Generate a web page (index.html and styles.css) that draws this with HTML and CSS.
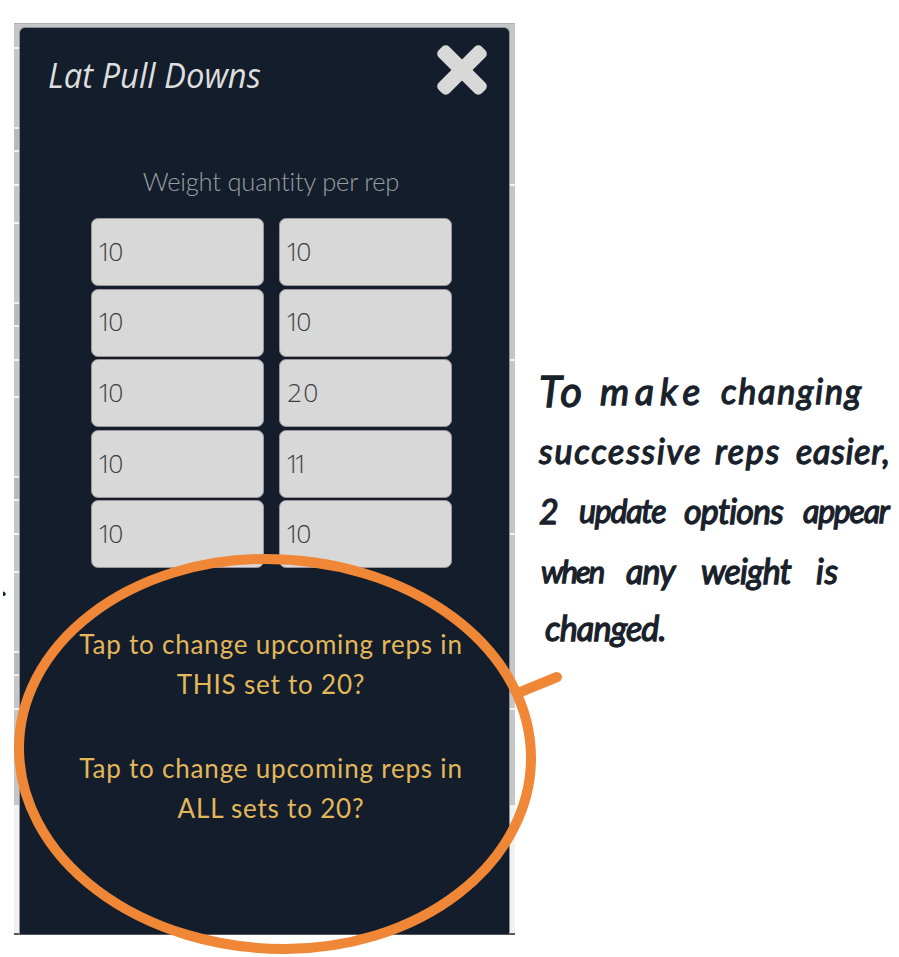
FILE: index.html
```html
<!DOCTYPE html>
<html lang="en">
<head>
<meta charset="utf-8">
<title>Lat Pull Downs</title>
<link rel="stylesheet" href="styles.css">
</head>
<body>
<main class="board">
  <section class="device">
    <div class="rail rail-left"></div>
    <div class="panel">
      <header class="head">
        <h1>Lat Pull Downs</h1>
        <svg class="close" viewBox="0 0 50 50" role="img" aria-label="Close"><g transform="rotate(45 25 25)"><rect x="-5.5" y="17.5" width="61" height="15" rx="5"/><rect x="17.5" y="-5.5" width="15" height="61" rx="5"/></g></svg>
      </header>
      <p class="label">Weight quantity per rep</p>
      <div class="grid">
        <div class="field">10</div><div class="field">10</div>
        <div class="field">10</div><div class="field">10</div>
        <div class="field">10</div><div class="field wide">20</div>
        <div class="field">10</div><div class="field ones">11</div>
        <div class="field">10</div><div class="field">10</div>
      </div>
      <p class="option">Tap to change upcoming reps in<br>THIS set to 20?</p>
      <p class="option">Tap to change upcoming reps in<br>ALL sets to 20?</p>
    </div>
    <div class="rail rail-right"></div>
  </section>
  <aside class="note">
    <p class="l1"><span class="to">To</span> <span class="make">make</span> <span class="ls2">changing</span></p>
    <p class="l2"><span class="ls2">successive</span> <span class="ls2">reps</span> <span class="ls1">easier,</span></p>
    <p class="l3"><span>2</span> <span class="tight">update</span> <span class="snug">options</span> <span class="tight">appear</span></p>
    <p class="l4"><span class="tighter">when</span> <span class="snug">any</span> <span class="snug">weight</span> <span class="ls1">is</span></p>
    <p class="l5"><span class="snug">changed.</span></p>
  </aside>
  <svg class="marker" viewBox="0 0 899 957" aria-hidden="true">
    <path class="ring" d="M19 748A246 189 0 0 1 265 559A266 199 0 0 1 531 758A246 191 0 0 1 285 949A266 201 0 0 1 19 748Z"/>
    <path class="ring" d="M518 693 557 677"/>
    <path class="speck" d="M3 591.5 4.5 592 6 594 4.5 596 3 596Z"/>
  </svg>
</main>
</body>
</html>
```
FILE: styles.css
```css
* { box-sizing: border-box; }
body { margin: 0; background: #fff; overflow: hidden; }
p, h1 { margin: 0; font-weight: 400; }
.board { position: relative; display: flex; width: 899px; height: 957px; padding: 23px 0 0 14px; }
.device {
  display: grid; grid-template-columns: 6px 489px 6px; width: 501px; height: 912px;
  padding-top: 4px; border-top: 1px solid #aeb0b2; border-bottom: 2px solid #55585f;
  background: linear-gradient(#c5c6c8 781px, #f1f1f2 781px); flex: none;
}
.rail { margin-top: -4px; overflow: hidden; }
.rail-left {
  background: repeating-linear-gradient(#0000 0 23px, #f3f3f4 23px 25px, #0000 25px 103px, #eeeef0 103px 105px, #b9babe 105px 126px, #eeeef0 126px 128px, #0000 128px 160px, #f3f3f4 160px 162px, #0000 162px 174.7px) 0 0 / 5px 781px no-repeat;
}
.rail-right {
  background: repeating-linear-gradient(#0000 0 160px, #f3f3f4 160px 162px, #0000 162px 174.7px) 1px 0 / 5px 781px no-repeat;
}
.panel { background: #141d2b; border-radius: 5px 5px 0 0; box-shadow: 0 0 0 1px #8d9197; height: 906px; clip-path: inset(-1px -1px 0 -1px); }
.head { display: flex; justify-content: space-between; height: 136px; padding: 15px 22px 0 28px; }
h1 {
  font: italic 400 34.5px/64px "Open Sans", sans-serif; color: #dededf; white-space: nowrap;
  transform: scaleX(.95); transform-origin: left;
}
.close { width: 50px; height: 50px; margin-top: 2px; }
.close rect { fill: #d8d8d8; }
.label { font: 300 25.5px/34px Lato, sans-serif; color: #9a9da3; text-align: center; padding-left: 13px; letter-spacing: -.2px; }
.grid { display: grid; grid-template-columns: 173px 173px; grid-auto-rows: 68px; gap: 2.6px 15px; margin: 20px 0 0 71px; }
.field {
  display: flex; align-items: center; padding: 0 0 2px 5px; border: 1px solid #9b9499; border-radius: 7px;
  background: #d8d8d8; color: #3c3d3f; font: 300 26.5px/1 "Open Sans", sans-serif; letter-spacing: -4px;
}
.wide { letter-spacing: 1px; padding-left: 7px; }
.ones { letter-spacing: -7px; }
.option { font: 400 26px/40px Lato, sans-serif; color: #e2b85a; text-align: center; margin: 56px 0 0; padding-left: 13px; letter-spacing: .8px; white-space: nowrap; }
.option + .option { margin-top: 44px; }
.note {
  color: #19212b; font: italic 900 34px/60px Lato, sans-serif; padding: 338px 0 0 24px; width: 384px; flex: none;
  -webkit-text-stroke: 1.3px #19212b;
}
.note p { display: grid; white-space: nowrap; height: 60px; }
.note .l1 { grid-template-columns: 61px 121px 150px; }
.note .l2 { grid-template-columns: 176px 81px 100px; }
.note .l3 { grid-template-columns: 40px 105px 119px 90px; }
.note .l4 { grid-template-columns: 85px 75px 115px 40px; padding-left: 2px; }
.note .l5 { grid-template-columns: 130px; padding-left: 6px; margin-top: -3px; }
.to { font-size: 42px; letter-spacing: 3px; }
.make { font-size: 37px; letter-spacing: 6px; }
.ls2 { letter-spacing: 1.8px; }
.ls1 { letter-spacing: .8px; }
.snug { letter-spacing: -.8px; }
.tight { font-size: 32px; letter-spacing: -1.2px; }
.tighter { font-size: 31px; letter-spacing: -2px; }
.marker { position: absolute; inset: 0; width: 899px; height: 957px; }
.ring { fill: none; stroke: #ef8737; stroke-width: 10; stroke-linecap: round; }
.speck { fill: #19212b; }
```
